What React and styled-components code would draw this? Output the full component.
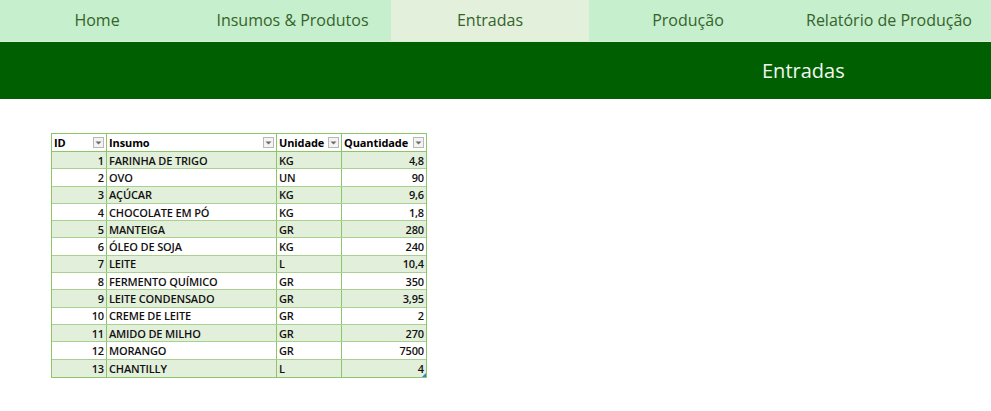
import React from "react";
import styled, { createGlobalStyle } from "styled-components";

const GlobalStyle = createGlobalStyle`
  html, body {
    margin: 0;
    padding: 0;
    background: #ffffff;
    font-family: "Open Sans", "Liberation Sans", sans-serif;
  }
`;

const tabs = ["Home", "Insumos & Produtos", "Entradas", "Produção", "Relatório de Produção"];

const rows = [
  [1, "FARINHA DE TRIGO", "KG", "4,8"],
  [2, "OVO", "UN", "90"],
  [3, "AÇÚCAR", "KG", "9,6"],
  [4, "CHOCOLATE EM PÓ", "KG", "1,8"],
  [5, "MANTEIGA", "GR", "280"],
  [6, "ÓLEO DE SOJA", "KG", "240"],
  [7, "LEITE", "L", "10,4"],
  [8, "FERMENTO QUÍMICO", "GR", "350"],
  [9, "LEITE CONDENSADO", "GR", "3,95"],
  [10, "CREME DE LEITE", "GR", "2"],
  [11, "AMIDO DE MILHO", "GR", "270"],
  [12, "MORANGO", "GR", "7500"],
  [13, "CHANTILLY", "L", "4"],
];

function App() {
  return (
    <Page>
      <GlobalStyle />
      <NavBar>
        {tabs.map((t) => (
          <NavTab key={t} active={t === "Entradas"}>
            {t}
          </NavTab>
        ))}
      </NavBar>
      <Banner>
        <BannerTitle>Entradas</BannerTitle>
      </Banner>
      <Content>
        <Table>
          <HeadRow>
            <HeadCell>
              ID
              <FilterButton />
            </HeadCell>
            <HeadCell>
              Insumo
              <FilterButton />
            </HeadCell>
            <HeadCell>
              Unidade
              <FilterButton />
            </HeadCell>
            <HeadCell last>
              Quantidade
              <FilterButton />
            </HeadCell>
          </HeadRow>
          {rows.map((r, i) => (
            <Row key={r[0]} band={i % 2 === 0} lastRow={i === rows.length - 1}>
              <Cell right>{r[0]}</Cell>
              <Cell>{r[1]}</Cell>
              <Cell>{r[2]}</Cell>
              <Cell right last>
                {r[3]}
                {i === rows.length - 1 && <Handle />}
              </Cell>
            </Row>
          ))}
        </Table>
      </Content>
    </Page>
  );
}

function FilterButton() {
  return (
    <FilterBox>
      <svg width="7" height="4" viewBox="0 0 7 4">
        <path d="M0.5 0.5 L6.5 0.5 L3.5 3.5 Z" fill="#6b6b6b" />
      </svg>
    </FilterBox>
  );
}

export default App;

const Page = styled.div`
  width: 991px;
  height: 411px;
  overflow: hidden;
`;

const NavBar = styled.nav`
  display: grid;
  grid-template-columns: 194px 197px 198px 198px 1fr;
  height: 41px;
  background: #c6efce;
`;

const NavTab = styled.div`
  display: flex;
  align-items: center;
  justify-content: center;
  padding-bottom: 2px;
  font-size: 16px;
  color: #35632a;
  background: ${(props) => (props.active ? "#e3f0dc" : "transparent")};
`;

const Banner = styled.header`
  display: flex;
  align-items: center;
  height: 58px;
  background: #005f00;
  border-top: 1px solid #d9eed6;
  box-sizing: border-box;
`;

const BannerTitle = styled.h1`
  margin: 0 0 0 762px;
  font-size: 20px;
  font-weight: 400;
  color: #f2f7f0;
`;

const Content = styled.main`
  padding: 34px 0 0 51px;
`;

const Table = styled.div`
  display: grid;
  width: 376px;
  border: 1px solid #8dc56a;
  box-sizing: border-box;
`;

const HeadRow = styled.div`
  display: grid;
  grid-template-columns: 55px 170px 65px 1fr;
  height: 18px;
  background: #ffffff;
  border-bottom: 1px solid #8dc56a;
  box-sizing: border-box;
`;

const HeadCell = styled.div`
  display: flex;
  align-items: center;
  justify-content: space-between;
  padding: 0 2px 0 2px;
  font-size: 11px;
  font-weight: 700;
  letter-spacing: -0.1px;
  color: #000000;
  border-right: ${(props) => (props.last ? "none" : "1px solid #8dc56a")};
  overflow: hidden;
`;

const FilterBox = styled.span`
  display: flex;
  align-items: center;
  justify-content: center;
  width: 11px;
  height: 11px;
  border: 1px solid #b8b8b8;
  background: #f4f4f4;
  box-sizing: border-box;
  flex-shrink: 0;
`;

const Row = styled.div`
  display: grid;
  grid-template-columns: 55px 170px 65px 1fr;
  height: 17.3px;
  background: ${(props) => (props.band ? "#e2efda" : "#ffffff")};
  border-bottom: ${(props) => (props.lastRow ? "none" : "1px solid #a9d08e")};
  box-sizing: border-box;
`;

const Cell = styled.div`
  position: relative;
  display: flex;
  align-items: center;
  justify-content: ${(props) => (props.right ? "flex-end" : "flex-start")};
  padding: 0 2px;
  font-size: 11px;
  font-weight: 600;
  letter-spacing: -0.15px;
  color: #111111;
  border-right: ${(props) => (props.last ? "none" : "1px solid #8dc56a")};
  white-space: nowrap;
  overflow: hidden;
`;

const Handle = styled.span`
  position: absolute;
  right: 0;
  bottom: 0;
  width: 0;
  height: 0;
  border-left: 4px solid transparent;
  border-bottom: 4px solid #3a7bd5;
`;
